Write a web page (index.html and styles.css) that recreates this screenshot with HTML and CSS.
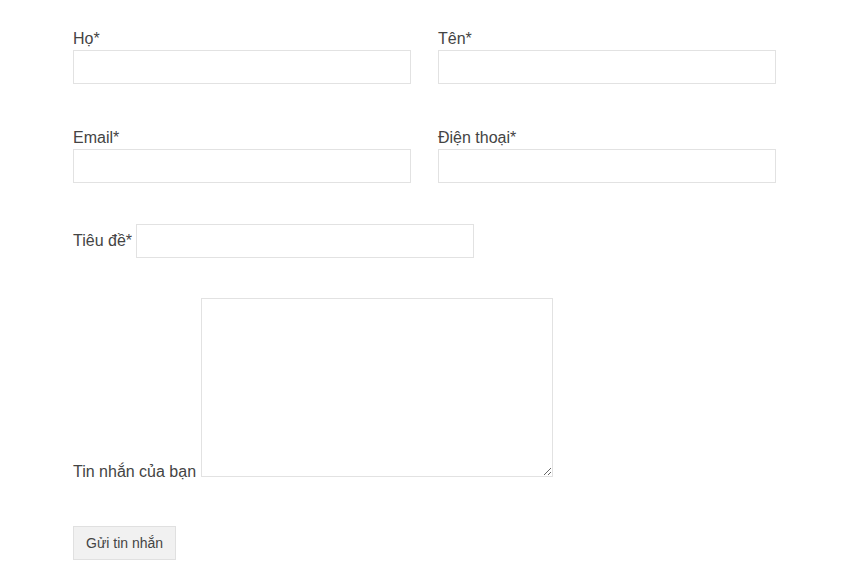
FILE: index.html
```html
<!DOCTYPE html>
<html>
<head>
    <title>Liên hệ</title>
    <link rel="stylesheet" href="styles.css">
</head>
<body>
    <form class="contact-form" onsubmit="return false;">
        <div class="two-col">
            <div class="field">
                <label for="ho">Họ*</label>
                <input type="text" id="ho">
            </div>
            <div class="field">
                <label for="ten">Tên*</label>
                <input type="text" id="ten">
            </div>
        </div>

        <div class="two-col">
            <div class="field">
                <label for="email">Email*</label>
                <input type="email" id="email">
            </div>
            <div class="field">
                <label for="dienthoai">Điện thoại*</label>
                <input type="text" id="dienthoai">
            </div>
        </div>

        <div class="subject-row">
            <label for="tieude">Tiêu đề*</label>
            <input type="text" id="tieude">
        </div>

        <div class="message-row"><label for="tinnhan">Tin nhắn của bạn</label> <textarea id="tinnhan"></textarea></div>

        <div class="actions">
            <button type="submit">Gửi tin nhắn</button>
        </div>
    </form>
</body>
</html>
```

FILE: styles.css
```css
body {
    margin: 0;
    background: #fff;
    font-family: "Liberation Sans", Arial, sans-serif;
    font-size: 16px;
    color: #444;
}

.contact-form {
    padding: 26px 0 0 73px;
}

label {
    line-height: 22px;
}

input,
textarea {
    box-sizing: border-box;
    border: 1px solid #e2e2e2;
    background: #fff;
    font-family: inherit;
    font-size: 14px;
    color: #444;
    margin: 0;
    padding: 6px 8px;
}

.two-col {
    display: grid;
    grid-template-columns: 338px 338px;
    column-gap: 27px;
    margin-bottom: 41px;
}

.field label {
    display: block;
    padding-top: 2px;
}

.field input {
    display: block;
    width: 338px;
    height: 34px;
}

.subject-row {
    display: flex;
    align-items: center;
    gap: 4px;
}

.subject-row input {
    width: 338px;
    height: 34px;
}

.message-row {
    margin-top: 40px;
    line-height: 22px;
}

.message-row textarea {
    width: 352px;
    height: 179px;
    resize: vertical;
}

.actions {
    margin-top: 43px;
}

button {
    box-sizing: border-box;
    height: 34px;
    padding: 0 12px;
    border: 1px solid #e0e0e0;
    background: #f1f1f1;
    font-family: inherit;
    font-size: 14px;
    color: #444;
    cursor: pointer;
}
```
